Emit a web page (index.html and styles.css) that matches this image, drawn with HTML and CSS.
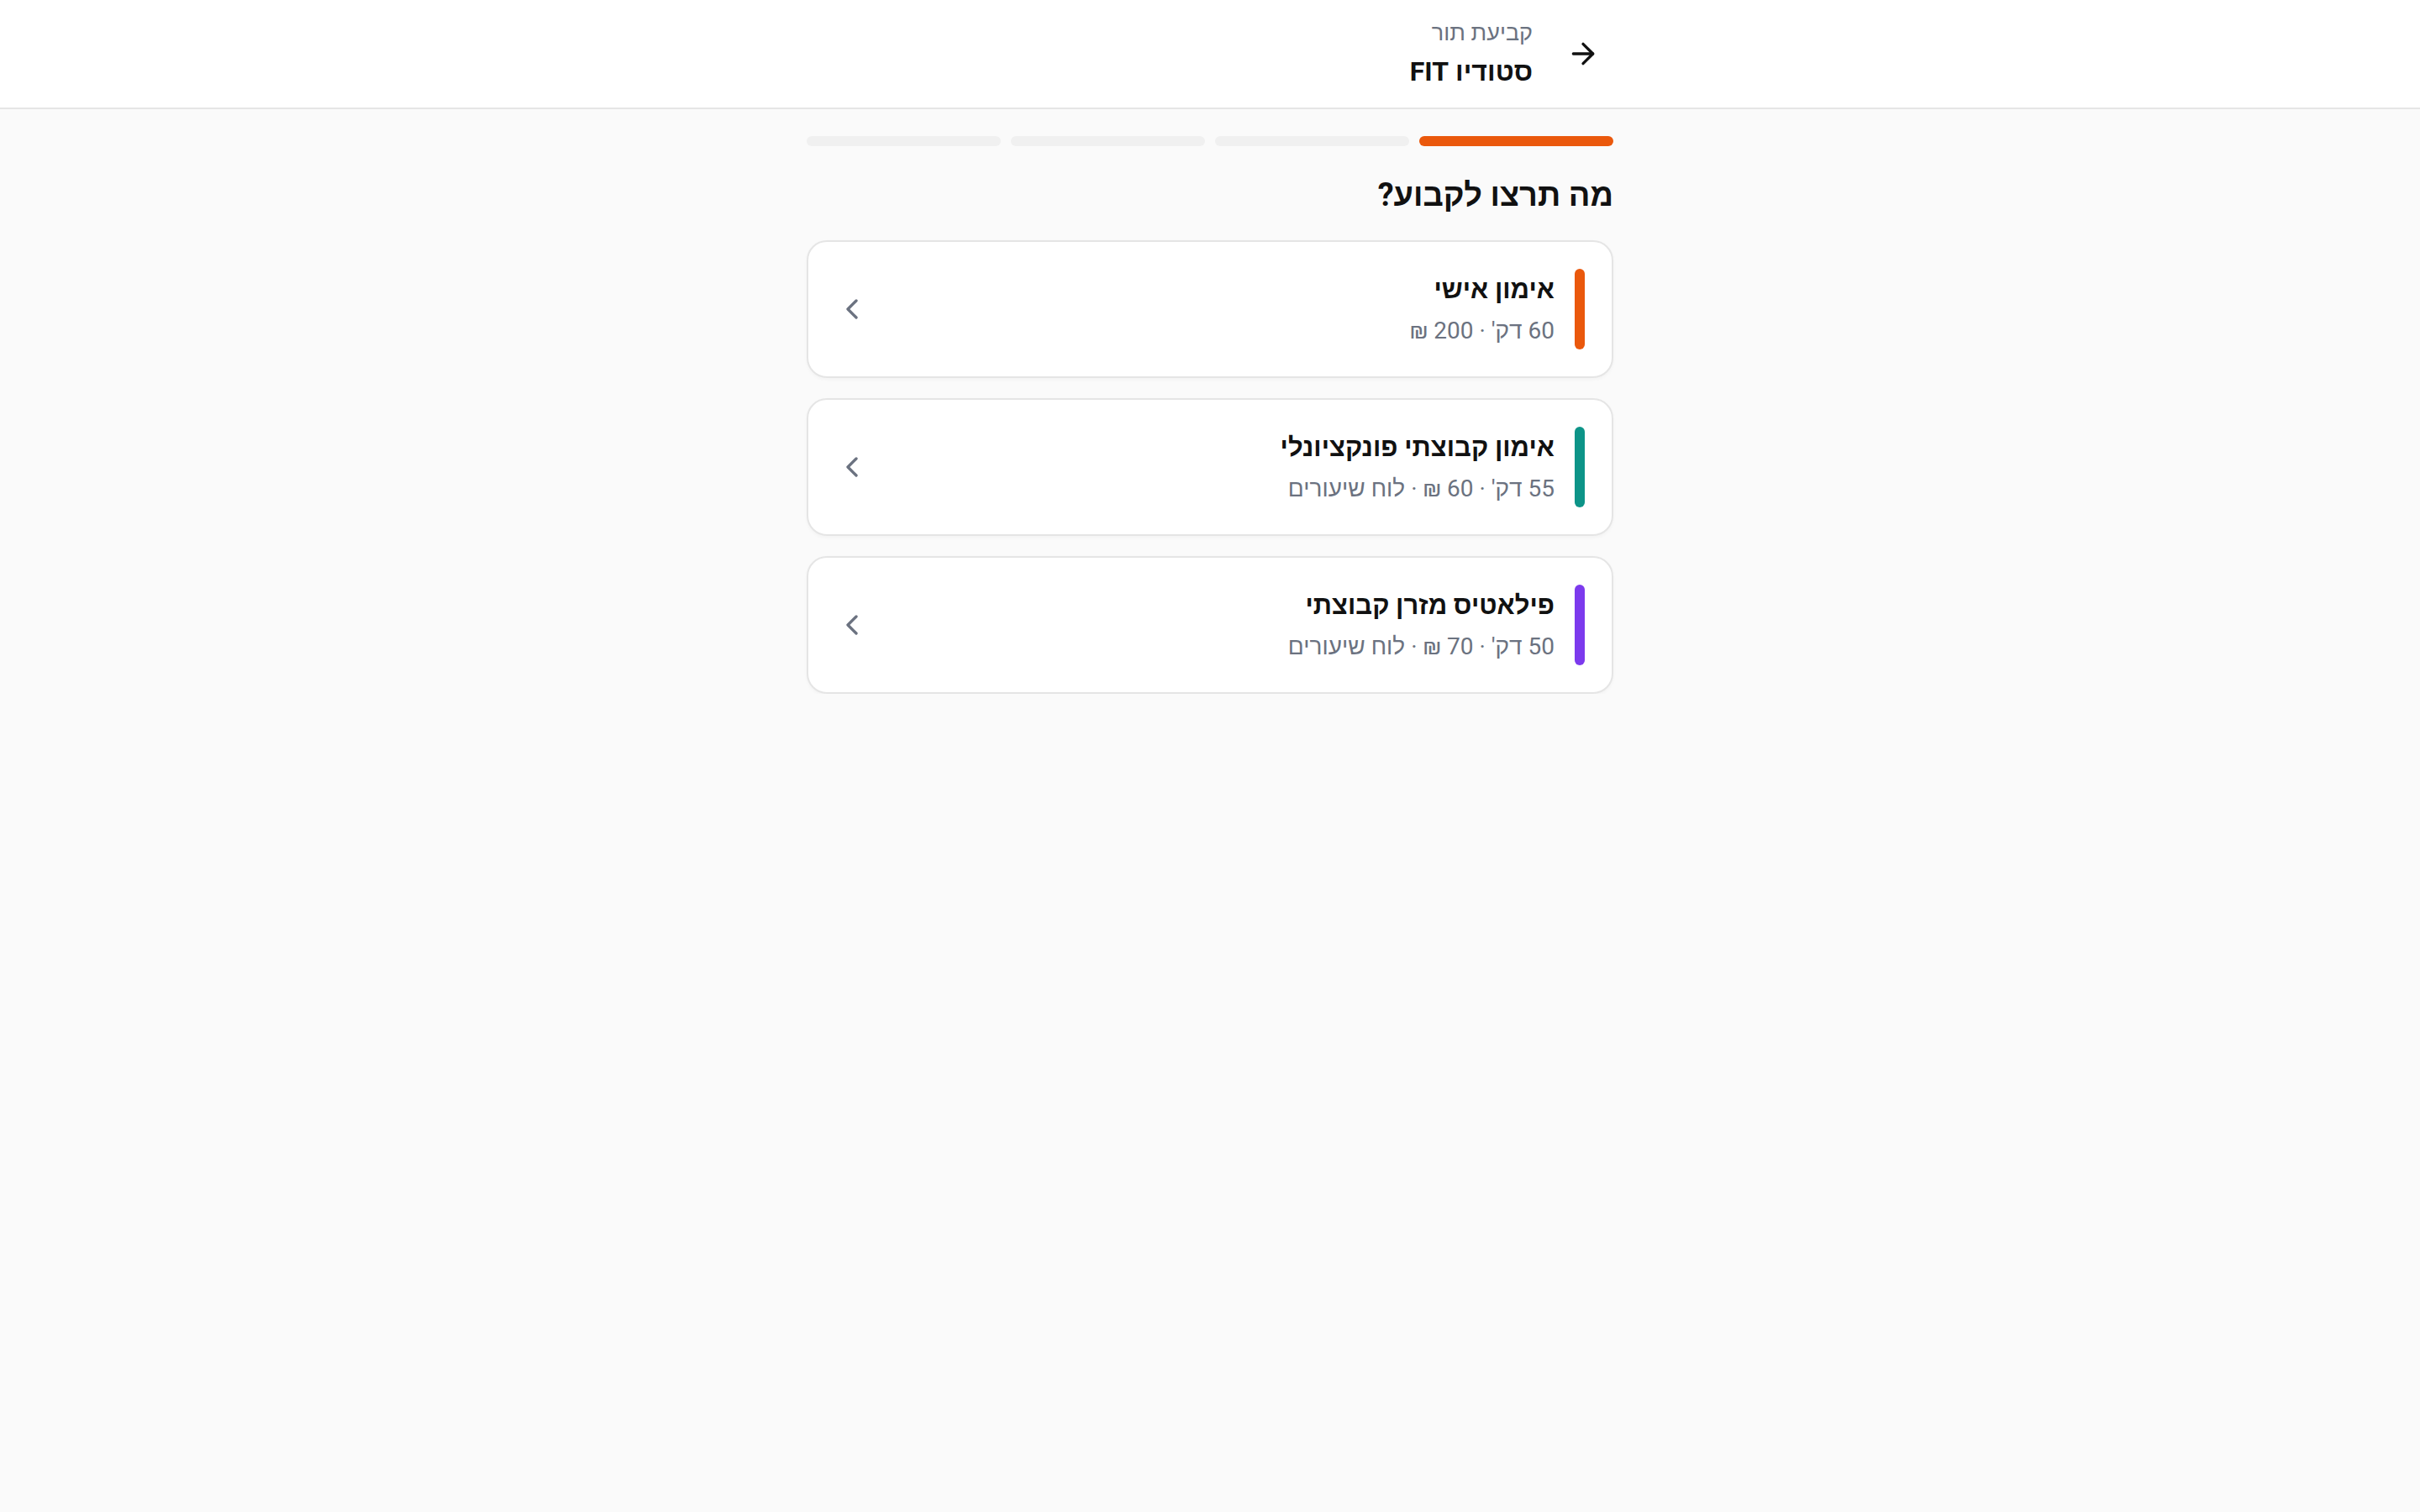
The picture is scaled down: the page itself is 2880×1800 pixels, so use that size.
FILE: index.html
```html
<!DOCTYPE html>
<html lang="he" dir="rtl">
<head>
    <meta charset="UTF-8">
    <meta name="viewport" content="width=device-width, initial-scale=1.0">
    <title>קביעת תור - סטודיו FIT</title>
    <link rel="stylesheet" href="styles.css">
</head>
<body>
    <header class="topbar">
        <div class="topbar-inner">
            <button class="back-btn" aria-label="חזרה">
                <svg viewBox="0 0 24 24" width="40" height="40" fill="none" stroke="currentColor" stroke-width="2" stroke-linecap="round" stroke-linejoin="round">
                    <path d="M5 12h14"></path>
                    <path d="m12 5 7 7-7 7"></path>
                </svg>
            </button>
            <div class="topbar-text">
                <div class="topbar-sub">קביעת תור</div>
                <div class="topbar-title">סטודיו FIT</div>
            </div>
        </div>
    </header>

    <main class="container">
        <div class="steps">
            <div class="step active"></div>
            <div class="step"></div>
            <div class="step"></div>
            <div class="step"></div>
        </div>

        <h1 class="page-title">מה תרצו לקבוע?</h1>

        <div class="services">
            <a href="#" class="service">
                <span class="service-bar orange"></span>
                <div class="service-info">
                    <div class="service-name">אימון אישי</div>
                    <div class="service-meta">60 דק' · 200 ₪</div>
                </div>
                <svg class="chevron" viewBox="0 0 24 24" width="40" height="40" fill="none" stroke="currentColor" stroke-width="2" stroke-linecap="round" stroke-linejoin="round">
                    <path d="m15 18-6-6 6-6"></path>
                </svg>
            </a>

            <a href="#" class="service">
                <span class="service-bar teal"></span>
                <div class="service-info">
                    <div class="service-name">אימון קבוצתי פונקציונלי</div>
                    <div class="service-meta">55 דק' · 60 ₪ · לוח שיעורים</div>
                </div>
                <svg class="chevron" viewBox="0 0 24 24" width="40" height="40" fill="none" stroke="currentColor" stroke-width="2" stroke-linecap="round" stroke-linejoin="round">
                    <path d="m15 18-6-6 6-6"></path>
                </svg>
            </a>

            <a href="#" class="service">
                <span class="service-bar purple"></span>
                <div class="service-info">
                    <div class="service-name">פילאטיס מזרן קבוצתי</div>
                    <div class="service-meta">50 דק' · 70 ₪ · לוח שיעורים</div>
                </div>
                <svg class="chevron" viewBox="0 0 24 24" width="40" height="40" fill="none" stroke="currentColor" stroke-width="2" stroke-linecap="round" stroke-linejoin="round">
                    <path d="m15 18-6-6 6-6"></path>
                </svg>
            </a>
        </div>
    </main>
</body>
</html>
```

FILE: styles.css
```css
* {
    box-sizing: border-box;
}

body {
    margin: 0;
    font-family: Roboto, sans-serif;
    background: #fafafa;
    color: #111111;
}

.topbar {
    background: white;
    border-bottom: 2px solid #e5e5e5;
}

.topbar-inner {
    max-width: 960px;
    height: 128px;
    margin: 0 auto;
    padding: 0 16px;
    display: flex;
    align-items: center;
    gap: 40px;
}

.back-btn {
    width: 40px;
    height: 40px;
    padding: 0;
    border: none;
    background: none;
    color: #111111;
    display: flex;
    align-items: center;
    justify-content: center;
    cursor: pointer;
}

.topbar-sub {
    font-size: 27px;
    line-height: 1.55;
    color: #6b7280;
}

.topbar-title {
    font-size: 32px;
    line-height: 1.5;
    font-weight: 700;
}

.container {
    max-width: 960px;
    margin: 0 auto;
    padding-top: 32px;
}

.steps {
    display: flex;
    gap: 12px;
}

.step {
    flex: 1;
    height: 12px;
    border-radius: 6px;
    background: #f0f0f0;
}

.step.active {
    background: #ea580c;
}

.page-title {
    margin: 33px 0 29px;
    font-size: 38px;
    line-height: 50px;
    font-weight: 700;
}

.services {
    display: flex;
    flex-direction: column;
    gap: 24px;
}

.service {
    display: flex;
    align-items: center;
    gap: 24px;
    padding: 32px;
    background: white;
    border: 2px solid #e5e5e5;
    border-radius: 24px;
    box-shadow: 0 2px 4px rgba(0, 0, 0, 0.03);
    text-decoration: none;
    color: inherit;
}

.service-bar {
    width: 12px;
    height: 96px;
    border-radius: 6px;
    flex-shrink: 0;
}

.service-bar.orange { background: #ea580c; }
.service-bar.teal { background: #0d9488; }
.service-bar.purple { background: #7c3aed; }

.service-info {
    flex: 1;
}

.service-name {
    font-size: 31px;
    line-height: 48px;
    font-weight: 700;
    margin-bottom: 4px;
}

.service-meta {
    font-size: 28px;
    line-height: 42px;
    color: #6b7280;
}

.chevron {
    color: #6b7280;
    flex-shrink: 0;
}
```
